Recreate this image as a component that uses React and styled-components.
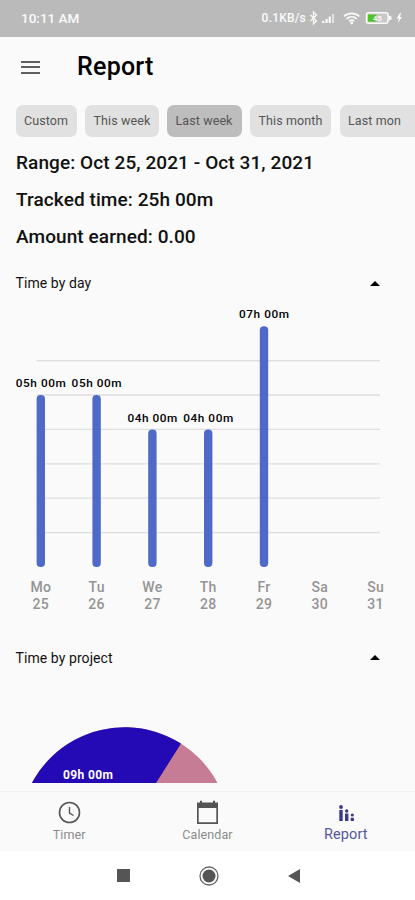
import React from 'react'
import styled, { createGlobalStyle, css } from "styled-components";

const GlobalStyle = createGlobalStyle`
  * {
    box-sizing: border-box;
  }
  body {
    margin: 0;
    background: #fafafa;
    font-family: Roboto, "Liberation Sans", sans-serif;
  }
`;

const Container = styled.div`
  width: 415px;
  height: 900px;
  overflow: hidden;
  display: flex;
  flex-direction: column;
  background: #fafafa;
  color: #111;
`;

const StatusBar = styled.div`
  height: 37px;
  flex-shrink: 0;
  display: flex;
  align-items: center;
  justify-content: space-between;
  padding: 0 9px 0 21px;
  background: #bababa;
  color: #fafafa;
`;

const Clock = styled.span`
  font-size: 13.5px;
  font-weight: 500;
  line-height: 16px;
  padding-bottom: 1px;
`;

const StatusRight = styled.div`
  display: flex;
  align-items: center;
  gap: 2px;
  font-size: 12px;
  font-weight: 500;
  letter-spacing: 0.2px;
  padding-bottom: 1px;
  svg {
    display: block;
  }
`;

const Header = styled.header`
  height: 60px;
  flex-shrink: 0;
  display: flex;
  align-items: center;
  padding-left: 21px;
`;

const MenuButton = styled.button`
  width: 19px;
  height: 13px;
  padding: 0;
  border: none;
  background: none;
  display: flex;
  flex-direction: column;
  justify-content: space-between;
  span {
    width: 19px;
    height: 2px;
    background: #606060;
  }
`;

const Title = styled.h1`
  margin: 0 0 0 37px;
  font-size: 25px;
  font-weight: 500;
  line-height: 30px;
  letter-spacing: 0.25px;
  color: #000;
`;

const Chips = styled.div`
  display: flex;
  gap: 8.5px;
  flex-shrink: 0;
  padding: 8px 0 0 15.5px;
`;

const Chip = styled.button`
  width: ${(props) => props.$width}px;
  height: 32px;
  flex-shrink: 0;
  border: none;
  border-radius: 7px;
  padding: 0 0 1px 8.5px;
  text-align: left;
  white-space: nowrap;
  font-family: inherit;
  font-size: 12.5px;
  letter-spacing: 0.1px;
  color: #555;
  background: ${(props) => (props.$active ? "#bdbdbd" : "#e1e1e1")};
`;

const Summary = styled.div`
  flex-shrink: 0;
  padding: 7px 16px 0;
`;

const Line = styled.p`
  margin: 0;
  height: 37px;
  line-height: 38px;
  font-size: 19px;
  font-weight: 500;
  letter-spacing: 0.09px;
  white-space: nowrap;
`;

const SectionHeader = styled.div`
  height: 30px;
  flex-shrink: 0;
  margin-top: ${(props) => props.$top}px;
  padding: 0 35px 0 15.5px;
  display: flex;
  align-items: center;
  justify-content: space-between;
  font-size: 14px;
  letter-spacing: 0.08px;
`;

const Caret = styled.span`
  border-left: 5px solid transparent;
  border-right: 5px solid transparent;
  border-bottom: 5px solid #000;
`;

const Chart = styled.svg`
  display: block;
  flex-shrink: 0;
`;

const BarLabel = styled.text`
  font-size: 11.8px;
  font-weight: 500;
  text-anchor: middle;
  fill: #000;
`;

const DayLabel = styled.text`
  font-size: 14px;
  font-weight: 500;
  letter-spacing: 0.3px;
  text-anchor: middle;
  fill: #949494;
`;

const PieWrapper = styled.div`
  flex: 1;
  display: flex;
  align-items: flex-end;
  padding-bottom: 8px;
`;

const PieLabel = styled.text`
  font-size: 12px;
  font-weight: 700;
  text-anchor: middle;
  fill: #fff;
`;

const Nav = styled.nav`
  height: 60px;
  flex-shrink: 0;
  display: grid;
  grid-template-columns: repeat(3, 1fr);
  border-top: 1px solid #f1f1f1;
  border-bottom: 1px solid #f5f5f5;
`;

const NavItem = styled.a`
  display: flex;
  flex-direction: column;
  align-items: center;
  padding-top: 8px;
  font-size: 12.5px;
  line-height: 15px;
  letter-spacing: 0.1px;
  color: #8a8a8a;
  svg {
    display: block;
    margin-bottom: 3px;
  }
  ${(props) =>
    props.$active &&
    css`
      font-size: 14.5px;
      color: #55579b;
    `}
`;

const SystemBar = styled.div`
  height: 49px;
  flex-shrink: 0;
  display: flex;
  align-items: center;
  justify-content: center;
  gap: 69px;
  background: #fff;
  padding-left: 1px;
  svg {
    display: block;
  }
`;

const ranges = [
  { label: "Custom", width: 61 },
  { label: "This week", width: 73.5 },
  { label: "Last week", width: 74.5, active: true },
  { label: "This month", width: 81 },
  { label: "Last mon", width: 90 },
];

const days = [
  { name: "Mo", date: 25, hours: 5 },
  { name: "Tu", date: 26, hours: 5 },
  { name: "We", date: 27, hours: 4 },
  { name: "Th", date: 28, hours: 4 },
  { name: "Fr", date: 29, hours: 7 },
  { name: "Sa", date: 30, hours: 0 },
  { name: "Su", date: 31, hours: 0 },
];

const HOUR = 34.4;
const BASE = 269;

const StatusIcons = () => (
  <svg width="98" height="16" viewBox="0 0 98 16" fill="none">
    <path d="M2.500 5l6 6-3 3V2l3 3-6 6" stroke="#fafafa" strokeWidth="1.3" />
    <g fill="#fafafa">
      <path d="M14 13h2.400v-2H14zM17.500 13h2.200V9h-2.200zM20.700 13h2.200V6.500h-2.200z" />
      <path d="M24 13h2.200V4H24z" opacity=".6" />
    </g>
    <g stroke="#fafafa" strokeWidth="1.7">
      <path d="M36 6.300c4.300-4 11-4 15.300 0" />
      <path d="M38.500 8.800c3-2.600 7.300-2.600 10.300 0" />
      <path d="M41 11.200c1.600-1.300 3.700-1.300 5.300 0" />
    </g>
    <circle cx="43.700" cy="13" r="1.400" fill="#fafafa" />
    <rect x="58.500" y="2.800" width="21.500" height="10.500" rx="2" fill="#c8c8c8" stroke="#fafafa" strokeWidth="1.5" />
    <rect x="60" y="4.600" width="8.500" height="7" fill="#4fc324" />
    <path d="M80.500 5.500l3 1v3l-3 1z" fill="#fafafa" />
    <text x="69.500" y="10.800" fontSize="7.500" fontWeight="700" textAnchor="middle" fill="#fafafa">45</text>
    <path d="M92 3l-3.500 5.500h2.300L90 13l4-6h-2.300l1.500-4z" fill="#fafafa" />
  </svg>
);

const DayChart = () => (
  <Chart width="415" height="318" viewBox="0 0 415 318">
    {[1, 2, 3, 4, 5, 6].map((h) => (
      <path key={h} d={`M36.500 ${BASE - h * HOUR}H380`} stroke="#dedede" strokeWidth="1.3" />
    ))}
    {days.map((day, i) => {
      const x = 40.8 + i * 55.8;
      const top = BASE - day.hours * HOUR;
      return (
        <g key={day.name}>
          {day.hours > 0 && (
            <>
              <rect x={x - 4.2} y={top} width="8.4" height={BASE - top} rx="4" fill="#4f69c8" />
              <BarLabel x={x} y={top - 7.8} textLength="50">{`0${day.hours}h 00m`}</BarLabel>
            </>
          )}
          <DayLabel x={x} y="293.500">{day.name}</DayLabel>
          <DayLabel x={x} y="310.500">{day.date}</DayLabel>
        </g>
      );
    })}
  </Chart>
);

const ProjectChart = () => (
  <Chart width="415" height="56" viewBox="0 0 415 56">
    <circle cx="124.700" cy="105.500" r="105.200" fill="#c67c94" />
    <path
      d="M124.700 105.500L181 16.600A105.200 105.200 0 0 0 19.500 105.500z"
      fill="#240ab4"
    />
    <PieLabel x="88" y="52" textLength="50">09h 00m</PieLabel>
  </Chart>
);

const App = () => {
  return (
    <>
      <GlobalStyle />
      <Container>
        <StatusBar>
          <Clock>10:11 AM</Clock>
          <StatusRight>
            0.1KB/s
            <StatusIcons />
          </StatusRight>
        </StatusBar>
        <Header>
          <MenuButton aria-label="Menu">
            <span />
            <span />
            <span />
          </MenuButton>
          <Title>Report</Title>
        </Header>
        <Chips>
          {ranges.map((range) => (
            <Chip key={range.label} $width={range.width} $active={range.active}>
              {range.label}
            </Chip>
          ))}
        </Chips>
        <Summary>
          <Line>Range: Oct 25, 2021 - Oct 31, 2021</Line>
          <Line>Tracked time: 25h 00m</Line>
          <Line>Amount earned: 0.00</Line>
        </Summary>
        <SectionHeader $top={13}>
          Time by day
          <Caret />
        </SectionHeader>
        <DayChart />
        <SectionHeader $top={26.5}>
          Time by project
          <Caret />
        </SectionHeader>
        <PieWrapper>
          <ProjectChart />
        </PieWrapper>
        <Nav>
          <NavItem>
            <svg width="24" height="24" viewBox="0 0 24 24" fill="none" stroke="#555" strokeWidth="1.6">
              <circle cx="12.500" cy="12.500" r="10" />
              <path d="M12.500 7v6l4 2.500" strokeWidth="1.4" />
            </svg>
            Timer
          </NavItem>
          <NavItem>
            <svg width="24" height="24" viewBox="0 0 24 24">
              <path
                d="M2 2.500h3V.7h2v1.800h11V.7h2v1.800h3V24H2zM3.700 8v14.300h17.600V8z"
                fill="#555"
                fillRule="evenodd"
              />
            </svg>
            Calendar
          </NavItem>
          <NavItem $active>
            <svg width="24" height="24" viewBox="0 0 24 24" fill="#393a89">
              <circle cx="7" cy="7" r="1.900" />
              <circle cx="12.700" cy="11" r="1.700" />
              <circle cx="18.300" cy="15" r="1.600" />
              <path d="M5.300 10h3.400v11H5.300zM11 13.500h3.400V21H11zM16.700 17.800h3.200V21h-3.200z" />
            </svg>
            Report
          </NavItem>
        </Nav>
        <SystemBar>
          <svg width="13" height="13" viewBox="0 0 13 13">
            <rect width="13" height="13" fill="#555" />
          </svg>
          <svg width="20" height="20" viewBox="0 0 20 20">
            <circle cx="10" cy="10" r="9" fill="none" stroke="#666" strokeWidth="1.3" />
            <circle cx="10" cy="10" r="6.5" fill="#555" />
          </svg>
          <svg width="12" height="14" viewBox="0 0 12 14">
            <path d="M12 0v14L0 7z" fill="#555" />
          </svg>
        </SystemBar>
      </Container>
    </>
  )
}

export default App
